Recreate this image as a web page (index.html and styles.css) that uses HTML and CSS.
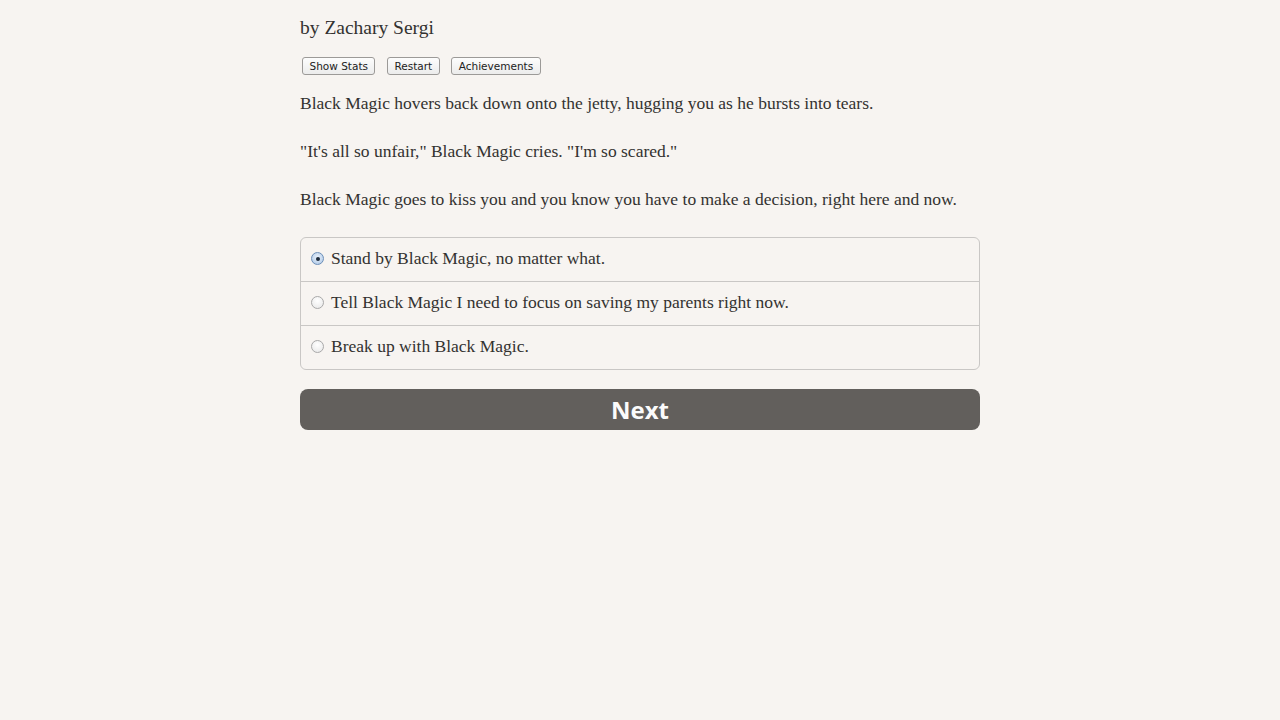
FILE: index.html
```html
<!DOCTYPE html>
<html>
<head>
<meta charset="utf-8">
<link rel="stylesheet" href="styles.css">
</head>
<body>
<main class="page">
  <h1 class="author">by Zachary Sergi</h1>
  <div class="tools">
    <button class="tool">Show Stats</button>
    <button class="tool">Restart</button>
    <button class="tool">Achievements</button>
  </div>
  <p class="para">Black Magic hovers back down onto the jetty, hugging you as he bursts into tears.</p>
  <p class="para">"It's all so unfair," Black Magic cries. "I'm so scared."</p>
  <p class="para">Black Magic goes to kiss you and you know you have to make a decision, right here and now.</p>
  <div class="choices">
    <label class="choice"><span class="radio checked"></span><span>Stand by Black Magic, no matter what.</span></label>
    <label class="choice"><span class="radio"></span><span>Tell Black Magic I need to focus on saving my parents right now.</span></label>
    <label class="choice"><span class="radio"></span><span>Break up with Black Magic.</span></label>
  </div>
  <button class="next">Next</button>
</main>
</body>
</html>
```
FILE: styles.css
```css
html, body {
  margin: 0;
  padding: 0;
  background: #f7f4f1;
}
body {
  font-family: "Liberation Serif", "Times New Roman", serif;
  color: #333230;
}
.page {
  width: 680px;
  margin: 0 auto;
  padding-top: 14px;
}
.author {
  font-size: 19.5px;
  font-weight: normal;
  margin: 0;
  line-height: 28px;
}
.tools {
  display: flex;
  gap: 11.5px;
  margin: 15px 0 0 2px;
}
.tool {
  font-family: "DejaVu Sans", "Liberation Sans", sans-serif;
  font-size: 10.5px;
  color: #222;
  background: linear-gradient(#fdfdfd, #ececec);
  border: 1px solid #9c9a98;
  border-radius: 3px;
  height: 18px;
  padding: 0 6.5px;
  line-height: 16px;
}
.para {
  font-size: 17.5px;
  line-height: 24px;
  margin: 16px 0 0 0;
}
.para + .para {
  margin-top: 24px;
}
.choices {
  margin-top: 26px;
  border: 1px solid #c9c7c5;
  border-radius: 6px;
  display: flex;
  flex-direction: column;
}
.choice {
  display: flex;
  align-items: center;
  gap: 6px;
  height: 44px;
  box-sizing: border-box;
  padding: 0 0 3px 10px;
  font-size: 17.5px;
  border-top: 1px solid #c9c7c5;
}
.choice:first-child {
  border-top: none;
  height: 43px;
}
.radio {
  width: 13px;
  height: 13px;
  border-radius: 50%;
  border: 1px solid #a9a9a9;
  background: radial-gradient(circle at 50% 35%, #ffffff, #e6e6e6);
  box-sizing: border-box;
  flex: none;
  position: relative;
  margin-right: 1px;
  margin-top: 1px;
}
.radio.checked {
  border-color: #6c8fb8;
  background: radial-gradient(circle at 50% 40%, #e9f1fb, #a9c4e4);
}
.radio.checked::after {
  content: "";
  position: absolute;
  left: 3.5px;
  top: 3.5px;
  width: 4px;
  height: 4px;
  border-radius: 50%;
  background: #1d2a3a;
}
.next {
  display: block;
  width: 100%;
  margin-top: 19px;
  height: 41px;
  border: none;
  border-radius: 8px;
  background: #625f5c;
  color: #fbfbfb;
  font-family: "Open Sans", "DejaVu Sans", sans-serif;
  font-weight: 700;
  font-size: 24px;
  line-height: 41px;
  padding: 0;
}
```
